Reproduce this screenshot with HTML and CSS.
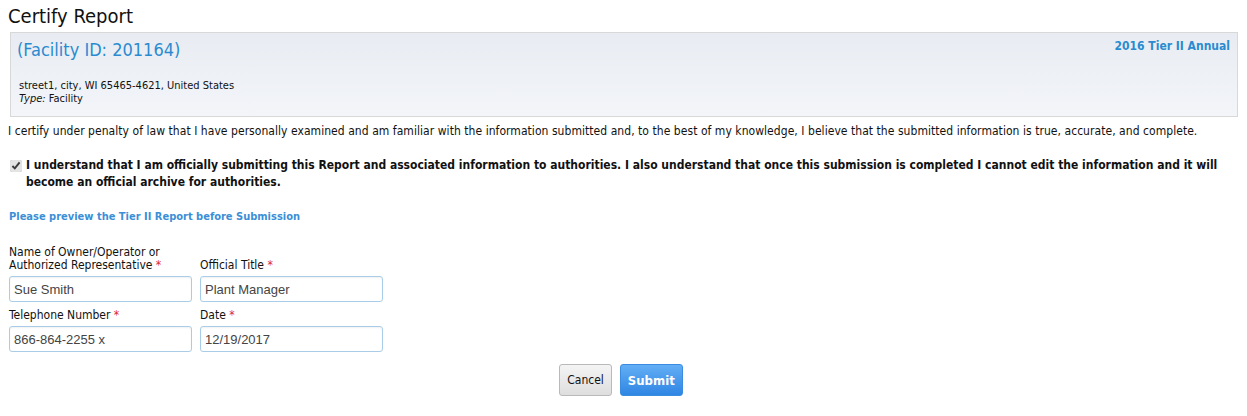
FILE: index.html
```html
<!DOCTYPE html>
<html lang="en">
<head>
  <meta charset="UTF-8" />
  <title>Certify Report</title>
  <link rel="stylesheet" href="styles.css">
</head>
<body>
<h1 class="page-title">Certify Report</h1>

<div class="facility">
  <div class="facility-head">
    <h2 class="facility-id">(Facility ID: 201164)</h2>
    <span class="report-year">2016 Tier II Annual</span>
  </div>
  <div class="facility-info">
    <div>street1, city, WI 65465-4621, United States</div>
    <div><em>Type:</em> Facility</div>
  </div>
</div>

<p class="certify">
  I certify under penalty of law that I have personally examined and am familiar with the information submitted and, to the best of my knowledge, I believe that the submitted information is true, accurate, and complete.
</p>

<label class="agree">
  <input type="checkbox" checked />
  <span>I understand that I am officially submitting this Report and associated information to authorities. I also understand that once this submission is completed I cannot edit the information and it will become an official archive for authorities.</span>
</label>

<a class="preview" href="#">Please preview the Tier II Report before Submission</a>

<div class="fields">
  <div class="field">
    <label>Name of Owner/Operator or<br />Authorized Representative <span class="req">*</span></label>
    <input type="text" value="Sue Smith" />
  </div>
  <div class="field">
    <label>Official Title <span class="req">*</span></label>
    <input type="text" value="Plant Manager" />
  </div>
  <div class="field">
    <label>Telephone Number <span class="req">*</span></label>
    <input type="text" value="866-864-2255 x" />
  </div>
  <div class="field">
    <label>Date <span class="req">*</span></label>
    <input type="text" value="12/19/2017" />
  </div>
</div>

<div class="actions">
  <button class="btn">Cancel</button>
  <button class="btn btn-primary">Submit</button>
</div>
</body>
</html>
```

FILE: styles.css
```css
body {
  font-family: Tahoma, "DejaVu Sans Condensed", "DejaVu Sans", sans-serif;
  font-size: 12px;
  color: #111;
  margin: 0;
  padding: 0 9px 0 9px;
  background: #fff;
}

.page-title {
  font-size: 20px;
  font-weight: normal;
  margin: 4px 0 4px -1px;
  line-height: 24px;
}

.facility {
  border: 1px solid #d8d8d8;
  background: linear-gradient(#e8ecf2, #f3f5f9);
  height: 83px;
  margin: 0 0 0 1px;
  padding: 0 7px 0 6px;
}
.facility-head {
  display: flex;
  justify-content: space-between;
  align-items: flex-start;
}
.facility-id {
  font-size: 18px;
  font-weight: normal;
  color: #2a8bd0;
  margin: 6px 0 0 0;
  line-height: 22px;
}
.report-year {
  font-weight: bold;
  font-size: 12px;
  color: #2a8bd0;
  margin-top: 6px;
}
.facility-info {
  font-size: 11px;
  line-height: 13px;
  margin: 18px 0 0 2px;
}

.certify {
  margin: 6px 0 0 -1px;
  font-size: 12px;
  letter-spacing: 0.05px;
  line-height: 16px;
}

.agree {
  display: flex;
  align-items: flex-start;
  font-weight: bold;
  font-size: 12px;
  line-height: 17px;
  margin-top: 18px;
}
.agree input {
  margin: 3px 4px 0 1px;
  width: 12px;
  height: 12px;
  accent-color: #e4e4e4;
}

.preview {
  display: block;
  margin-top: 19px;
  font-size: 11px;
  font-weight: bold;
  color: #3b8fd6;
  text-decoration: none;
}

.fields {
  display: grid;
  grid-template-columns: 183px 183px;
  column-gap: 8px;
  row-gap: 7px;
  margin-top: 23px;
  align-items: end;
}
.field label {
  display: block;
  line-height: 13px;
  margin-bottom: 4px;
}
.req {
  color: #e0282b;
}
.field input {
  box-sizing: border-box;
  width: 183px;
  height: 26px;
  border: 1px solid #a9cde8;
  border-radius: 3px;
  padding: 2px 4px;
  font-family: "Liberation Sans", Arial, sans-serif;
  font-size: 13px;
  color: #444;
  box-shadow: inset 0 1px 2px rgba(0, 0, 0, 0.06);
}

.actions {
  display: flex;
  justify-content: center;
  gap: 8px;
  margin-top: 12px;
  padding-right: 5px;
}
.btn {
  height: 32px;
  padding: 0 7px;
  border: 1px solid #b9b9b9;
  border-radius: 3px;
  background: linear-gradient(#f4f4f4, #dedede);
  font-family: Tahoma, "DejaVu Sans Condensed", "DejaVu Sans", sans-serif;
  font-size: 12px;
  color: #111;
}
.btn-primary {
  border-color: #3a8ce0;
  background: linear-gradient(#63aef5, #2f86e3);
  color: #fff;
  font-weight: bold;
  font-size: 13px;
  padding: 0 7px;
}
```
